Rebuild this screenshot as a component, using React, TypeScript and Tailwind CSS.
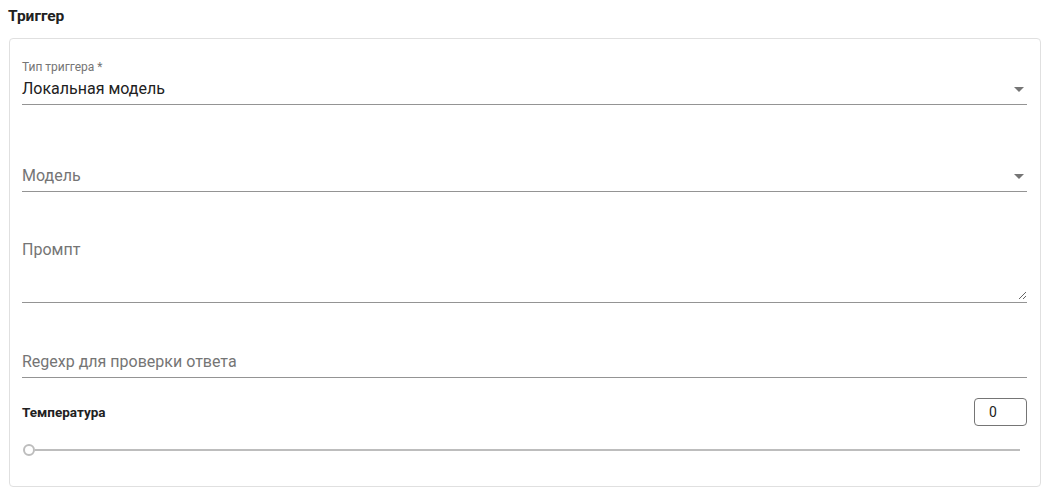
import React from 'react'

function Caret() {
  return (
    <svg width="10" height="5" viewBox="0 0 10 5" className="shrink-0">
      <path d="M0 0h10L5 5z" fill="#757575" />
    </svg>
  )
}

export default function App() {
  return (
    <div className="w-[1044px] h-[494px] bg-white font-['Roboto','Liberation_Sans',sans-serif] text-[#212121]">
      {/* заголовок */}
      <div className="pt-[6px] pl-[8px] h-[26px] text-[15.5px] leading-[20px] font-bold">Триггер</div>

      <div className="ml-[9px] mt-[12px] w-[1032px] h-[449px] border border-[#e0e0e0] rounded-[4px] pl-[12px] pr-[13px]">
        {/* тип триггера */}
        <div className="pt-[20px] border-b border-[#949494] pb-[3px]">
          <div className="text-[12px] leading-[16px] text-[#757575]">Тип триггера *</div>
          <div className="mt-[2px] flex items-center justify-between h-[24px]">
            <span className="text-[16px] leading-[24px]">Локальная модель</span>
            <span className="mr-[3px]"><Caret /></span>
          </div>
        </div>

        {/* модель */}
        <div className="mt-[59px] border-b border-[#949494] pb-[3px] flex items-center justify-between h-[28px]">
          <span className="text-[16px] leading-[24px] text-[#757575]">Модель</span>
          <span className="mr-[3px]"><Caret /></span>
        </div>

        {/* промпт */}
        <div className="mt-[46px] border-b border-[#949494] h-[65px]">
          <textarea
            placeholder="Промпт"
            className="block w-full h-[62px] resize-y outline-none text-[16px] leading-[24px] placeholder:text-[#757575] p-0"
          />
        </div>

        {/* regexp */}
        <div className="mt-[47px] border-b border-[#949494] pb-[3px] h-[28px]">
          <span className="text-[16px] leading-[24px] text-[#757575]">Regexp для проверки ответа</span>
        </div>

        {/* температура */}
        <div className="mt-[20px] flex items-center justify-between h-[28px]">
          <span className="text-[13.5px] font-bold">Температура</span>
          <div className="w-[53px] h-[28px] border border-[#757575] rounded-[4px] pl-[14px] flex items-center text-[14px]">0</div>
        </div>

        <div className="mt-[18px] flex items-center h-[12px] pl-[1px] pr-[7px]">
          <div className="w-[12px] h-[12px] rounded-full border-2 border-[#bdbdbd] bg-white shrink-0" />
          <div className="flex-1 h-[2px] bg-[#bdbdbd]" />
        </div>
      </div>
    </div>
  )
}
